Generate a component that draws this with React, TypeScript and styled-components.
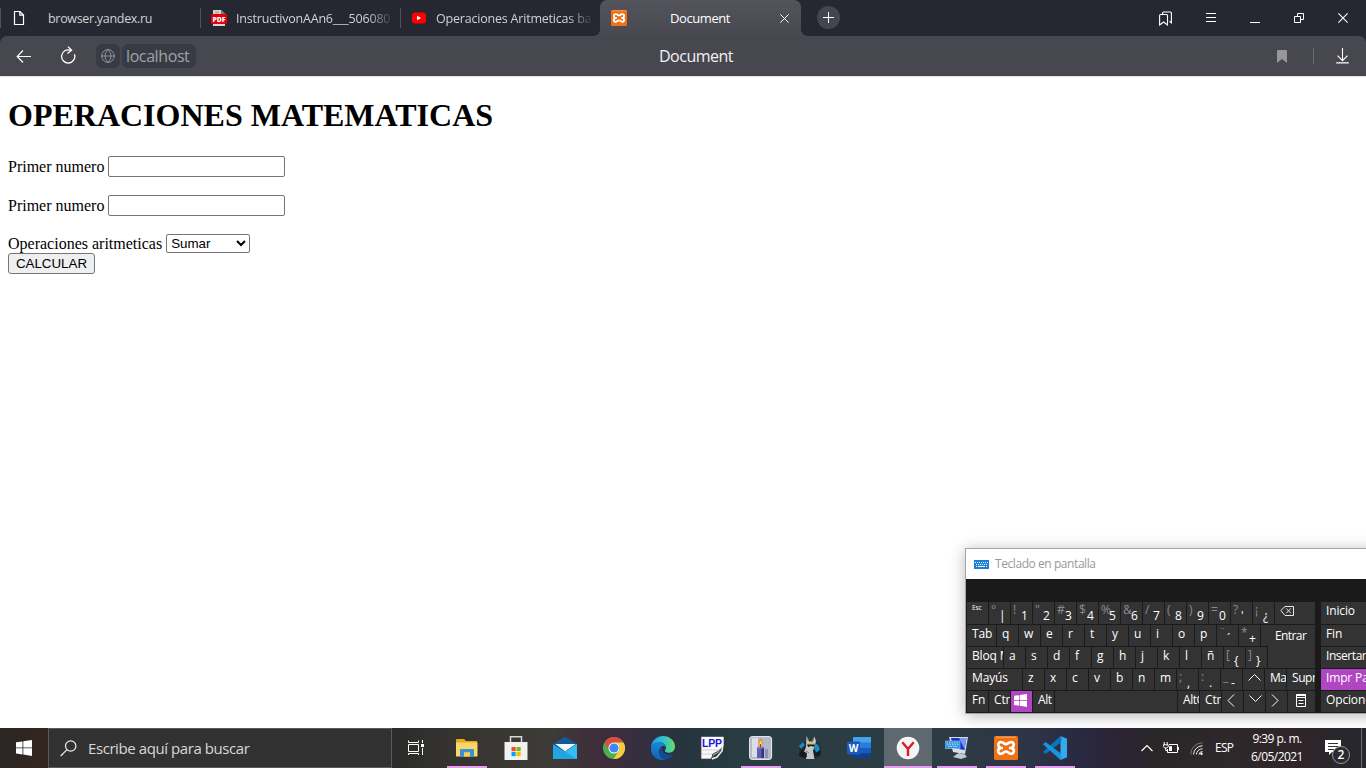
import React from 'react';
import styled, { createGlobalStyle, css } from 'styled-components';

const GlobalStyle = createGlobalStyle`
  *, *::before, *::after { box-sizing: border-box; }
  html, body { margin: 0; padding: 0; overflow: hidden; background: #fff; }
  svg { display: block; flex: none; }
`;

const ui = "'Open Sans', 'Noto Sans', sans-serif";

const Screen = styled.div`
  position: relative;
  width: 1366px;
  height: 768px;
  display: flex;
  flex-direction: column;
  overflow: hidden;
  background: #fff;
  font-family: ${ui};
`;

/* ---------- browser chrome ---------- */

const BrowserChrome = styled.div`
  height: 76px;
  flex: none;
  background: #252830;
`;

const TabStrip = styled.header`
  height: 36px;
  display: flex;
`;

const Tab = styled.div<{ $pad: number; $gap: number }>`
  width: 200px;
  height: 36px;
  flex: none;
  display: flex;
  align-items: center;
  gap: ${p => p.$gap}px;
  padding-left: ${p => p.$pad}px;
  background: linear-gradient(#50535a, #50535a) 0 8px / 1px 20px no-repeat;
`;

const TabTitle = styled.span<{ $fade?: boolean }>`
  font-size: 12.5px;
  line-height: 20px;
  padding-top: 1px;
  letter-spacing: ${p => (p.$fade ? -0.2 : -0.31)}px;
  color: #d0d1d3;
  white-space: nowrap;
  overflow: hidden;
  ${p =>
    p.$fade &&
    css`
      width: 156px;
      mask-image: linear-gradient(90deg, #000 132px, transparent 158px);
    `}
`;

const ActiveTab = styled.div`
  position: relative;
  width: 201px;
  height: 36px;
  flex: none;
  display: flex;
  align-items: center;
  padding-left: 11px;
  border-radius: 7px 7px 0 0;
  background: linear-gradient(#54545c, #484850);
  &::before, &::after {
    content: '';
    position: absolute;
    bottom: 0;
    width: 6px;
    height: 6px;
  }
  &::before { left: -6px; background: radial-gradient(circle at 0 0, transparent 5.5px, #47474f 6px); }
  &::after { right: -6px; background: radial-gradient(circle at 100% 0, transparent 5.5px, #47474f 6px); }
`;

const ActiveTitle = styled.span`
  width: 60px;
  margin: 0 50px 0 43px;
  font-size: 13px;
  line-height: 18px;
  letter-spacing: -0.42px;
  color: #fff;
  white-space: nowrap;
`;

const NewTab = styled.div`
  width: 23px;
  height: 23px;
  margin: 6px auto 0 16px;
  display: grid;
  place-items: center;
  border-radius: 50%;
  background: #44464d;
`;

const WindowControls = styled.div`
  display: flex;
  align-items: center;
  height: 36px;
  padding-right: 18px;
  gap: 34px;
`;

const AddressBar = styled.div`
  height: 40px;
  display: grid;
  grid-template-columns: 620px 1fr 620px;
  align-items: center;
  background: #47474f;
  border-radius: 7px 7px 0 0;
`;

const NavSide = styled.div`
  display: flex;
  align-items: center;
  padding-left: 16px;
`;

const ReloadGap = styled.span`
  margin-left: 28px;
  margin-top: -3px;
`;

const GlobeChip = styled.div`
  width: 24px;
  height: 24px;
  margin-left: 20px;
  display: grid;
  place-items: center;
  border-radius: 6px;
  background: #383b43;
`;

const HostChip = styled.div`
  width: 74px;
  height: 24px;
  margin-left: 2px;
  padding-left: 4px;
  border-radius: 6px;
  background: #383b43;
  font-size: 16px;
  line-height: 25px;
  letter-spacing: -0.4px;
  color: #a0a2a8;
  white-space: nowrap;
`;

const PageTitle = styled.div`
  padding: 0 0 0 39px;
  font-size: 16px;
  line-height: 22px;
  letter-spacing: -0.5px;
  color: #f1f1f2;
`;

const ActionSide = styled.div`
  display: flex;
  align-items: center;
  justify-content: flex-end;
  padding-right: 17px;
`;

const ThinRule = styled.div`
  width: 1px;
  height: 16px;
  margin: 0 22px 0 26px;
  background: #6a6a71;
`;

/* ---------- web page ---------- */

const Page = styled.main`
  height: 652px;
  flex: none;
  padding: 0 8px;
  border-top: 1px solid #e4e4e6;
  font-family: 'Liberation Serif', 'Times New Roman', serif;
  font-size: 16px;
  color: #000;
`;

const Heading = styled.h1`
  margin: 20px 0 22px;
  font-size: 32px;
  line-height: 37px;
  font-weight: bold;
`;

const FieldRow = styled.div<{ $height: number; $after: number }>`
  height: ${p => p.$height}px;
  margin-bottom: ${p => p.$after}px;
  display: flex;
  align-items: flex-start;
  gap: 4px;
  line-height: ${p => p.$height + 1}px;
`;

const NumberInput = styled.input`
  width: 177px;
  height: 21px;
  margin: 0;
  border: 1px solid #767676;
  border-radius: 2px;
  background: #fff;
`;

const OperationSelect = styled.select`
  width: 84px;
  height: 19px;
  margin: 0;
  border: 1px solid #767676;
  border-radius: 2px;
  background: #fff;
  color: #000;
  font: 13.333px 'Liberation Sans', Arial, sans-serif;
`;

const SubmitButton = styled.button`
  display: block;
  width: 87px;
  height: 21px;
  padding: 0;
  border: 1px solid #767676;
  border-radius: 3px;
  background: #efefef;
  color: #000;
  font: 13.333px 'Liberation Sans', Arial, sans-serif;
`;

/* ---------- on-screen keyboard window ---------- */

const KeyboardWindow = styled.section`
  position: absolute;
  left: 965px;
  top: 548px;
  width: 420px;
  height: 166px;
  border: 1px solid #a4a4a4;
  background: #1a1a1a;
  box-shadow: 0 2px 14px rgba(0, 0, 0, 0.28);
`;

const KeyboardTitle = styled.div`
  height: 30px;
  display: flex;
  align-items: center;
  gap: 6px;
  padding: 0 0 0 8px;
  background: #fff;
  color: #999;
  font-size: 12px;
  line-height: 16px;
  letter-spacing: -0.43px;
`;

const KeyboardBody = styled.div`
  display: flex;
  gap: 6px;
  padding: 23px 0 0 1px;
`;

const KeyBlock = styled.div`
  position: relative;
  width: 348px;
  display: flex;
  flex-direction: column;
  gap: 1px;
`;

const KeyRow = styled.div`
  display: flex;
  gap: 1px;
`;

const KeyCap = styled.div<{ $w?: number; $accent?: boolean; $tiny?: boolean; $h?: number; $tight?: boolean }>`
  width: ${p => p.$w ?? 21}px;
  height: ${p => p.$h ?? 21}px;
  flex: none;
  display: flex;
  padding-left: 5px;
  overflow: hidden;
  background: ${p => (p.$accent ? '#b146c2' : '#333')};
  color: #fff;
  font-size: ${p => (p.$tiny ? 6.5 : 12)}px;
  line-height: ${p => (p.$tiny ? 12 : 18)}px;
  letter-spacing: ${p => (p.$tight ? -0.45 : -0.15)}px;
  white-space: nowrap;
`;

const DualCap = styled(KeyCap)`
  padding-left: 2px;
`;

const ShiftMark = styled.span`
  width: 8px;
  flex: none;
  color: #8c8c8c;
  font-size: 12px;
  line-height: 16px;
`;

const BaseMark = styled.span<{ $lift: boolean }>`
  align-self: flex-end;
  line-height: 16px;
  margin-bottom: ${p => (p.$lift ? 0 : -1)}px;
`;

const WinKey = styled.span`
  margin: 3px 0 0 -2px;
`;

const MenuKey = styled.span`
  margin-left: 3px;
`;

const SideKeys = styled.div`
  display: flex;
  flex-direction: column;
  gap: 1px;
`;

const EnterKey = styled.div`
  position: absolute;
  left: 294px;
  top: 23px;
  width: 54px;
  height: 43px;
  padding: 1px 0 0 14px;
  background: #333;
  clip-path: polygon(0 0, 100% 0, 100% 100%, 7px 100%, 7px 21px, 0 21px);
  color: #fff;
  font-size: 12px;
  line-height: 20px;
  letter-spacing: -0.6px;
`;

/* ---------- taskbar ---------- */

const Taskbar = styled.footer`
  height: 40px;
  flex: none;
  display: flex;
  background: linear-gradient(90deg, #2b2524 0, #33261f 48px, #2b2b2a 392px, #353431 460px, #3d3b38 550px,
    #3e2d3b 600px, #352e3f 640px, #25343f 685px, #293c41 740px, #2b3c43 850px, #2d3a43 960px, #2e3447 1030px,
    #292942 1080px, #2b2433 1120px, #292728 1160px, #2d2829 1230px, #302529 1290px, #26272d 1366px);
`;

const StartButton = styled.div`
  width: 48px;
  display: grid;
  place-items: center;
`;

const SearchBox = styled.div`
  width: 344px;
  height: 40px;
  display: flex;
  align-items: center;
  gap: 11px;
  padding-left: 11px;
  border: 1px solid #5b5b5a;
  background: #323232;
  color: #d8d8d8;
  font-size: 15px;
  letter-spacing: -0.42px;
  white-space: nowrap;
`;

const TaskView = styled.div`
  width: 51px;
  padding-left: 16px;
  display: flex;
  align-items: center;
`;

const AppButton = styled.div<{ $state: 'idle' | 'open' | 'active' }>`
  width: 48px;
  height: 40px;
  margin-right: 1px;
  display: grid;
  place-items: center;
  background-color: ${p => (p.$state === 'active' ? '#5e686f' : 'transparent')};
  background-image: ${p => (p.$state === 'idle' ? 'none' : 'linear-gradient(#e79cf0, #e79cf0)')};
  background-size: ${p => (p.$state === 'active' ? '48px' : '40px')} 2px;
  background-position: 50% 100%;
  background-repeat: no-repeat;
`;

const Tray = styled.div`
  margin-left: auto;
  width: 225px;
  height: 40px;
  display: flex;
  align-items: center;
  color: #fff;
`;

const TrayGap = styled.span<{ $left: number }>`
  margin-left: ${p => p.$left}px;
`;

const Language = styled.span`
  width: 19px;
  margin-left: 12px;
  font-size: 12px;
  line-height: 40px;
  letter-spacing: -0.75px;
`;

const Clock = styled.div`
  width: 60px;
  margin: 0 18px 0 13px;
  display: flex;
  flex-direction: column;
  align-items: center;
  font-size: 12px;
  line-height: 18px;
  letter-spacing: -0.55px;
  white-space: nowrap;
`;

const Notices = styled.div`
  position: relative;
  width: 26px;
  height: 28px;
  padding-top: 6px;
`;

const NoticeCount = styled.span`
  position: absolute;
  left: 7px;
  top: 12px;
  width: 18px;
  height: 18px;
  border: 1px solid #999;
  border-radius: 50%;
  background: #2b2b2d;
  font-size: 12px;
  font-weight: 600;
  line-height: 15px;
  text-align: center;
`;

const DesktopEdge = styled.div`
  width: 1px;
  height: 40px;
  margin: 0 4px 0 auto;
  background: #6b6b6e;
`;

/* ---------- drawings ---------- */

const WindowsLogo = ({ size }: { size: number }) => (
  <svg width={size} height={size} viewBox="0 0 16 16" fill="#fff">
    <path d="M0 2.3 6.5 1.4V7.5H0ZM7.3 1.3 16 0V7.5H7.3ZM0 8.3H6.5V14.5L0 13.6ZM7.3 8.3H16V16L7.3 14.6Z" />
  </svg>
);

const FileIcon = () => (
  <svg width="12" height="16" viewBox="0 0 12 16" fill="none" stroke="#fff" strokeWidth="1.2">
    <path d="M1.5 1.5H7L10.5 5V14.5H1.5ZM6.8 1.5V5.2H10.5" />
  </svg>
);

const PdfIcon = () => (
  <svg width="16" height="16" viewBox="0 0 16 16">
    <path d="M2 0H10L14 4V16H2Z" fill="#d5d5d5" />
    <path d="M10 0V4H14Z" fill="#777" />
    <path d="M4 2H8M4 4H8" stroke="#999" />
    <rect y="4" width="16" height="10" rx="1" fill="#e2000c" />
    <text x="1.5" y="11.5" fill="#fff" fontSize="6.8" fontWeight="800" fontFamily="Open Sans" textLength="13">PDF</text>
  </svg>
);

const YoutubeIcon = () => (
  <svg width="14" height="12" viewBox="0 0 14 12">
    <rect y=".5" width="14" height="11" rx="3" fill="#f00" />
    <path d="M5 3.7 9.2 6 5 8.3Z" fill="#fff" />
  </svg>
);

const XamppIcon = ({ size }: { size: number }) => (
  <svg width={size} height={size} viewBox="0 0 24 24">
    <rect width="24" height="24" rx="1.6" fill="#ee7114" />
    <path d="M2 1.2H22" stroke="#ffad6b" strokeWidth="1" />
    <path
      d="M8 6.2C5.5 5.6 4 7.3 4.3 9.2 4.5 10.7 5.5 11.6 6.8 12 4.8 12.4 3.9 13.8 4.2 15.4 4.6 17.4 6.3 18.2 8 17.5 9.5 16.9 10.3 15.5 12 15.5S14.5 16.9 16 17.5C17.7 18.2 19.4 17.4 19.8 15.4 20.1 13.8 19.2 12.4 17.2 12 18.5 11.6 19.5 10.7 19.7 9.2 20 7.3 18.5 5.6 16 6.2 14.5 6.5 13.7 8.2 12 8.2S9.5 6.5 8 6.2Z"
      fill="none" stroke="#fff" strokeWidth="2.7"
    />
    <path d="M6 12H9M15 12H18" stroke="#fff" strokeWidth="2.4" />
  </svg>
);

const CloseIcon = ({ size }: { size: number }) => (
  <svg width={size} height={size} viewBox="0 0 10 10" stroke="#fff" strokeWidth="1.1">
    <path d="M.4.4 9.6 9.6M9.6.4.4 9.6" />
  </svg>
);

const PlusIcon = () => (
  <svg width="11" height="11" viewBox="0 0 11 11" stroke="#fff"><path d="M5.5 0V11M0 5.5H11" /></svg>
);

const CollectionsIcon = () => (
  <svg width="13" height="15" viewBox="0 0 13 15" fill="none" stroke="#fff" strokeWidth="1.1">
    <path d="M.6 14V4.5Q.6 3.5 1.6 3.5H7.5Q8.5 3.5 8.5 4.5V14L4.6 11ZM3.6 3.2V2Q3.6 1 4.6 1H11.4Q12.4 1 12.4 2V11.8L10.5 10.3" />
  </svg>
);

const MenuIcon = () => (
  <svg width="10" height="10" viewBox="0 0 10 10" stroke="#fff"><path d="M0 .5H10M0 4.5H10M0 8.5H10" /></svg>
);

const MinimizeIcon = () => (
  <svg width="10" height="10" viewBox="0 0 10 10" stroke="#fff"><path d="M0 9.5H10" /></svg>
);

const RestoreIcon = () => (
  <svg width="10" height="10" viewBox="0 0 10 10" stroke="#fff" fill="none">
    <path d="M.5 3.5H6.5V9.5H.5ZM3.5 3.5V.5H9.5V6.5H6.5" />
  </svg>
);

const BackIcon = () => (
  <svg width="16" height="14" viewBox="0 0 16 14" stroke="#fff" strokeWidth="1.2" fill="none">
    <path d="M15 7.5H1.5M7 1.5 1.2 7.5 7 13.5" />
  </svg>
);

const ReloadIcon = () => (
  <svg width="16" height="18" viewBox="0 0 16 18" stroke="#fff" strokeWidth="1.3" fill="none">
    <path d="M14.4 8.2A6.6 6.6 0 1 1 10.6 4.3M8 .6 11.6 4.3 7.4 7.5" />
  </svg>
);

const GlobeIcon = () => (
  <svg width="14" height="14" viewBox="0 0 14 14" stroke="#92949a" fill="none">
    <circle cx="7" cy="7" r="6.4" />
    <path d="M.6 7H13.4M7 .6C3 4.6 3 9.4 7 13.4M7 .6C11 4.6 11 9.4 7 13.4" />
  </svg>
);

const BookmarkIcon = () => (
  <svg width="10" height="13" viewBox="0 0 10 13"><path d="M0 1Q0 0 1 0H9Q10 0 10 1V13L5 9 0 13Z" fill="#96969b" /></svg>
);

const DownloadIcon = () => (
  <svg width="13" height="16" viewBox="0 0 13 16" stroke="#fff" fill="none" strokeWidth="1.1">
    <path d="M6.5 0V12.5M1.5 7.7 6.5 12.7 11.5 7.7M.2 14.9H12.8" />
  </svg>
);

const KeyboardGlyph = () => (
  <svg width="15" height="9" viewBox="0 0 15 9">
    <rect width="15" height="9" fill="#1a80d6" />
    <path d="M1 2.5H14M2 4.5H13" stroke="#fff" strokeDasharray="1 1" />
    <path d="M2 6.5H3M4 6.5H11M12 6.5H13" stroke="#fff" />
  </svg>
);

const BackspaceIcon = () => (
  <svg width="14" height="18" viewBox="0 0 14 18" stroke="#e8e8e8" fill="none">
    <path d="M.8 8.5 5 4.5H13.5V13.5H5ZM6.2 6.4 10.9 11.2M10.9 6.4 6.2 11.2" />
  </svg>
);

const ArrowGlyph = ({ d }: { d: string }) => (
  <svg width="13" height="18" viewBox="0 0 13 18" stroke="#fff" fill="none"><path d={d} /></svg>
);

const MenuKeyIcon = () => (
  <svg width="10" height="18" viewBox="0 0 10 18" stroke="#fff" fill="none">
    <path d="M.5 3.5H9.5V15.5H.5ZM0 4.5H10M0 6.5H10M2.5 9.5H7.5M2.5 12.5H7.5" />
  </svg>
);

const SearchIcon = () => (
  <svg width="17" height="17" viewBox="0 0 17 17" stroke="#eee" strokeWidth="1.2" fill="none">
    <circle cx="10.7" cy="6" r="5.2" /><path d="M7 9.7.7 16" />
  </svg>
);

const TaskViewIcon = () => (
  <svg width="16" height="16" viewBox="0 0 16 16" stroke="#fff" fill="none">
    <path d="M.5.5V2.5H10.5V.5M.5 15V13.5H10.5V15M.5 4.5H10.5V11.5H.5ZM14.5 0V3M14.5 8V15" />
    <path d="M13 4H16V7H13Z" fill="#fff" stroke="none" />
  </svg>
);

const AppSvg = ({ children }: { children: React.ReactNode }) => (
  <svg width="24" height="24" viewBox="0 0 24 24">{children}</svg>
);

const ExplorerIcon = () => (
  <AppSvg>
    <path d="M1 4Q1 3 2 3H9L11 5H22V20H1Z" fill="#eea91b" />
    <path d="M1 6.5H22.5V20.5H1Z" fill="#fcd767" />
    <path d="M5 21V14Q5 13 6 13H18Q19 13 19 14V21H15V16.5H9V21Z" fill="#3a91d5" />
    <path d="M9 16.5H15V20.5H9Z" fill="#f8cf56" />
  </AppSvg>
);

const StoreIcon = () => (
  <AppSvg>
    <path d="M6.5 6V.8H17.5V6" fill="none" stroke="#d8d8d8" strokeWidth="1.5" />
    <path d="M.5 6H23.5V24H.5Z" fill="#f1f1f1" />
    <path d="M7.5 11H11.7V15.2H7.5Z" fill="#f25022" /><path d="M12.5 11H16.7V15.2H12.5Z" fill="#7fba00" />
    <path d="M7.5 16H11.7V20.2H7.5Z" fill="#00a4ef" /><path d="M12.5 16H16.7V20.2H12.5Z" fill="#ffb900" />
  </AppSvg>
);

const MailIcon = () => (
  <AppSvg>
    <path d="M0 8 12 .8 24 8V13H0Z" fill="#135a9d" />
    <path d="M0 8.5 12 15.5 24 8V23H0Z" fill="#20a5e5" />
    <path d="M24 8V23L12 15.5Z" fill="#34bdf2" />
    <path d="M2.3 8H22.7L12 15.3Z" fill="#f7f9fa" />
  </AppSvg>
);

const ChromeIcon = () => (
  <AppSvg>
    <circle cx="12" cy="12" r="11" fill="#4bae4f" />
    <path d="M2.5 6.5A11 11 0 0 1 21.5 6.5H12A5.5 5.5 0 0 0 7.2 14.8Z" fill="#df4b3e" />
    <path d="M21.5 6.5A11 11 0 0 1 11.6 23L16.8 14.8A5.5 5.5 0 0 0 12 6.5Z" fill="#f9cc3e" />
    <circle cx="12" cy="12" r="5.5" fill="#fff" /><circle cx="12" cy="12" r="4.6" fill="#4285f4" />
  </AppSvg>
);

const EdgeIcon = () => (
  <AppSvg>
    <defs>
      <linearGradient id="edgeTop"><stop offset="0" stopColor="#1c9de1" /><stop offset=".55" stopColor="#35c1cf" /><stop offset="1" stopColor="#65dd5c" /></linearGradient>
      <linearGradient id="edgeBase" x2="0" y2="1"><stop offset="0" stopColor="#1886d9" /><stop offset="1" stopColor="#1261b4" /></linearGradient>
    </defs>
    <path d="M0 11C.8 4 6 0 12.2 0 19 0 24 5 24 10.6 24 14.5 21.5 16.7 18 16.7 15 16.7 13.8 15.7 13.8 14.8 13.8 14 15 13.5 15 11.5 15 8.5 12 6.5 8.5 6.5 4.5 6.5 1.5 8.2 0 11Z" fill="url(#edgeTop)" />
    <path d="M0 11.5C1 8.2 4.5 6.5 8.5 6.5 12 6.5 15 8.5 15 11 12.5 8.5 8.2 11 8.2 15.5 8.2 20 11.5 23 14.5 23.7 6.5 25.5-.5 20 0 11.5Z" fill="url(#edgeBase)" />
    <path d="M10.3 11C6.8 14 8.2 22.8 15 23.6 18.5 22.8 21 20.5 22.5 18 16.5 20.5 10.4 17.2 10.3 11Z" fill="#124c94" />
  </AppSvg>
);

const LppIcon = () => (
  <AppSvg>
    <path d="M1 .5H24V8L21 14 18 17 14 19 12 23H1Z" fill="#f9f9f9" stroke="#444" strokeWidth=".7" />
    <path d="M2 14H20M2 18H15" stroke="#d0d0d0" />
    <path d="M11.5 23 13 18 18 15.5 23 11" fill="none" stroke="#333" />
    <path d="M12 23 17 21 22 15 23 8" fill="none" stroke="#eee" strokeWidth="1.6" />
    <text x="2" y="11" fontFamily="Liberation Sans" fontSize="10.5" fontWeight="700" fill="#1a16df" textLength="20">LPP</text>
  </AppSvg>
);

const CandleIcon = () => (
  <AppSvg>
    <rect x=".6" y=".6" width="22" height="22.8" rx="2.5" fill="#b4b9c8" stroke="#efeff4" />
    <path d="M3 2H9V21H3Z" fill="#e9ebf1" opacity=".75" />
    <path d="M8 11.5H15V22H8Z" fill="#5f61ae" /><path d="M12.5 11.5H15V22H12.5Z" fill="#34376f" />
    <path d="M16 13H19V22H16Z" fill="#8b8fc2" />
    <ellipse cx="11.5" cy="11.5" rx="3.5" ry="1" fill="#8487cf" />
    <path d="M11.5 2C14.5 7 14 10 11.5 10S8.5 7 11.5 2Z" fill="#f57d17" /><path d="M11.5 4C13.4 8 13 9.7 11.5 9.7S9.6 8 11.5 4Z" fill="#ffe74a" />
    <path d="M11.5 8V11.5" stroke="#c92c20" />
  </AppSvg>
);

const DonkeyIcon = () => (
  <AppSvg>
    <path d="M2 11 7 5 9 11 14 10 19 6Q25 12 22 20L15 23H8L1 20Z" fill="#222324" />
    <path d="M1 10 5 6 7 9 3 13ZM17 7Q22 8 22 16L19 18 16 12Z" fill="#178cc9" />
    <path d="M8.5 0 11 5.5H14L16.5.5 18 5 16.5 10 15 15 16.5 23H8L9 17 6 16 8 11Z" fill="#c3c8ca" />
    <path d="M9.2 1 10.5 5M16 1.5 14.3 6M8 15 11 17" stroke="#777" />
    <path d="M9 7.4Q13 6 17 7.4V8.6H9Z" fill="#e9b52b" /><path d="M9 8.6H17L16 10.8 13 10 10 11Z" fill="#17191b" />
    <path d="M1 20Q3 14 7 16L9 21ZM16 18 22 14 22 20Z" fill="#17191a" />
  </AppSvg>
);

const WordIcon = () => (
  <AppSvg>
    <path d="M6 1.5Q6 1 7 1H24V7H6Z" fill="#41a5ee" /><path d="M6 6.5H24V12H6Z" fill="#2b7cd3" />
    <path d="M6 12H24V17.5H6Z" fill="#185abd" /><path d="M6 17.5H24V22H7Q6 22 6 21Z" fill="#103f91" />
    <rect y="5.5" width="13" height="13" rx="1" fill="#185abd" />
    <text x="6.5" y="15.7" textAnchor="middle" fontFamily="Open Sans" fontWeight="700" fontSize="10" fill="#fff">W</text>
  </AppSvg>
);

const YandexIcon = () => (
  <AppSvg>
    <circle cx="12" cy="12" r="11.3" fill="#f4f4f4" />
    <path d="M6.3 6.3 12 13 17.7 6.3M12 12.5V20" fill="none" stroke="#db1c24" strokeWidth="2.4" />
  </AppSvg>
);

const OskIcon = () => (
  <AppSvg>
    <path d="M4 1H23L20 18 8 16Z" fill="#d9dde6" /><path d="M6 2H21.5L19.5 14 8 12Z" fill="#1833c6" />
    <path d="M14 2H21.5L19.5 13Z" fill="#7697ef" /><path d="M14 17 20 18.5 22 21 16 23 8 21 12 18Z" fill="#c3c8cf" />
    <rect y="5" width="15" height="7.5" fill="#2d91df" stroke="#b4dafa" strokeWidth=".5" />
    <path d="M1.5 7H14M2 8.8H13.5M3 10.6H12" stroke="#dcefff" strokeWidth=".8" strokeDasharray="1.5 1" />
  </AppSvg>
);

const VsCodeIcon = () => (
  <AppSvg>
    <path d="M17.5 0 24 2.7V21.3L17.5 24Z" fill="#35a9ed" />
    <path d="M18 6.5 2.5 18 0 15.8 17.5 0 18.5 1Z" fill="#0876bd" />
    <path d="M18 17.5 2.5 6 0 8.2 17.5 24 18.5 23Z" fill="#1994df" />
  </AppSvg>
);

const ChevronUp = () => (
  <svg width="12" height="8" viewBox="0 0 12 8" fill="none" stroke="#fff" strokeWidth="1.2"><path d="M.5 7 6 1.5 11.5 7" /></svg>
);

const BatteryIcon = () => (
  <svg width="16" height="12" viewBox="0 0 16 12" fill="none" stroke="#fff">
    <path d="M6 2.5H14.5V10.5H4.5V7M15.5 5V8M1.2 0V3M4.2 0V3M.3 2.8H5.2V4.5L3.8 6H1.7L.3 4.5ZM2.7 6V8.5H4.5" />
    <path d="M6 4.2H9V9H6Z" fill="#fff" stroke="none" />
  </svg>
);

const WifiIcon = () => (
  <svg width="13" height="13" viewBox="0 0 13 13" fill="none" stroke="#eee">
    <path d="M.7 12.5A11.7 11.7 0 0 1 12.5.8" stroke="#777" />
    <path d="M3.6 12.5A8.8 8.8 0 0 1 12.5 3.8M6.4 12.5A6 6 0 0 1 12.5 6.8M9 12.5A3.6 3.6 0 0 1 12.5 9.5" />
    <circle cx="11.5" cy="11.7" r="1.2" fill="#fff" stroke="none" />
  </svg>
);

const NoticeIcon = () => (
  <svg width="17" height="17" viewBox="0 0 17 17">
    <path d="M0 0H16V12H7L4 15V12H0Z" fill="#fff" /><path d="M3 3.5H13M3 6.5H13M3 9.5H9" stroke="#333" />
  </svg>
);

/* ---------- data ---------- */

const numberKeys: [string, string][] = [
  ['°', '|'], ['!', '1'], ['"', '2'], ['#', '3'], ['$', '4'], ['%', '5'], ['&', '6'],
  ['/', '7'], ['(', '8'], [')', '9'], ['=', '0'], ['?', "'"], ['¡', '¿'],
];

const apps: { name: string; state: 'idle' | 'open' | 'active'; icon: React.ReactNode }[] = [
  { name: 'explorer', state: 'open', icon: <ExplorerIcon /> },
  { name: 'store', state: 'idle', icon: <StoreIcon /> },
  { name: 'mail', state: 'idle', icon: <MailIcon /> },
  { name: 'chrome', state: 'idle', icon: <ChromeIcon /> },
  { name: 'edge', state: 'idle', icon: <EdgeIcon /> },
  { name: 'lpp', state: 'idle', icon: <LppIcon /> },
  { name: 'candle', state: 'open', icon: <CandleIcon /> },
  { name: 'donkey', state: 'idle', icon: <DonkeyIcon /> },
  { name: 'word', state: 'idle', icon: <WordIcon /> },
  { name: 'yandex', state: 'active', icon: <YandexIcon /> },
  { name: 'osk', state: 'open', icon: <OskIcon /> },
  { name: 'xampp', state: 'open', icon: <XamppIcon size={24} /> },
  { name: 'code', state: 'open', icon: <VsCodeIcon /> },
];

const Dual = ({ marks: [shift, base], tall = false }: { marks: [string, string]; tall?: boolean }) => (
  <DualCap $h={tall ? 22 : 21}><ShiftMark>{shift}</ShiftMark><BaseMark $lift={tall}>{base}</BaseMark></DualCap>
);

const Letters = ({ keys }: { keys: string }) => (
  <>{keys.split('').map(k => <KeyCap key={k}>{k}</KeyCap>)}</>
);

const OnScreenKeyboard = () => (
  <KeyboardWindow>
    <KeyboardTitle><KeyboardGlyph />Teclado en pantalla</KeyboardTitle>
    <KeyboardBody>
      <KeyBlock>
        <KeyRow>
          <KeyCap $tiny $h={22}>Esc</KeyCap>
          {numberKeys.map(m => <Dual key={m[1]} marks={m} tall />)}
          <KeyCap $w={40} $h={22}><BackspaceIcon /></KeyCap>
        </KeyRow>
        <KeyRow>
          <KeyCap $w={29}>Tab</KeyCap>
          <Letters keys="qwertyuiop" />
          <Dual marks={['¨', '´']} />
          <Dual marks={['*', '+']} />
        </KeyRow>
        <KeyRow>
          <KeyCap $w={36}>Bloq M</KeyCap>
          <Letters keys="asdfghjklñ" />
          <Dual marks={['[', '{']} />
          <Dual marks={[']', '}']} />
        </KeyRow>
        <KeyRow>
          <KeyCap $w={55}>Mayús</KeyCap>
          <Letters keys="zxcvbnm" />
          <Dual marks={[';', ',']} />
          <Dual marks={[':', '.']} />
          <Dual marks={['_', '-']} />
          <KeyCap><ArrowGlyph d="M.5 11.5 6.5 5.5 12.5 11.5" /></KeyCap>
          <KeyCap $tight>Ma</KeyCap>
          <KeyCap $w={28} $tight>Supr</KeyCap>
        </KeyRow>
        <KeyRow>
          <KeyCap>Fn</KeyCap>
          <KeyCap>Ctr</KeyCap>
          <KeyCap $accent><WinKey><WindowsLogo size={13} /></WinKey></KeyCap>
          <KeyCap $tight>Alt</KeyCap>
          <KeyCap $w={122} />
          <KeyCap $tight>AltG</KeyCap>
          <KeyCap>Ctr</KeyCap>
          <KeyCap><ArrowGlyph d="M7 3.5 1 9.5 7 15.5" /></KeyCap>
          <KeyCap><ArrowGlyph d="M.5 4.5 6.5 10.5 12.5 4.5" /></KeyCap>
          <KeyCap><ArrowGlyph d="M1 3.5 7 9.5 1 15.5" /></KeyCap>
          <KeyCap $w={27}><MenuKey><MenuKeyIcon /></MenuKey></KeyCap>
        </KeyRow>
        <EnterKey>Entrar</EnterKey>
      </KeyBlock>
      <SideKeys>
        <KeyCap $w={80} $h={22}>Inicio</KeyCap>
        <KeyCap $w={80}>Fin</KeyCap>
        <KeyCap $w={80} $tight>Insertar</KeyCap>
        <KeyCap $w={80} $accent>Impr Pant</KeyCap>
        <KeyCap $w={80}>Opciones</KeyCap>
      </SideKeys>
    </KeyboardBody>
  </KeyboardWindow>
);

export default function App() {
  return (
    <Screen>
      <GlobalStyle />
      <BrowserChrome>
        <TabStrip>
          <Tab $pad={13} $gap={23}><FileIcon /><TabTitle>browser.yandex.ru</TabTitle></Tab>
          <Tab $pad={11} $gap={9}><PdfIcon /><TabTitle $fade>InstructivonAAn6___506080</TabTitle></Tab>
          <Tab $pad={12} $gap={10}><YoutubeIcon /><TabTitle $fade>Operaciones Aritmeticas bas</TabTitle></Tab>
          <ActiveTab>
            <XamppIcon size={16} />
            <ActiveTitle>Document</ActiveTitle>
            <CloseIcon size={9} />
          </ActiveTab>
          <NewTab><PlusIcon /></NewTab>
          <WindowControls>
            <CollectionsIcon /><MenuIcon /><MinimizeIcon /><RestoreIcon /><CloseIcon size={10} />
          </WindowControls>
        </TabStrip>
        <AddressBar>
          <NavSide>
            <BackIcon />
            <ReloadGap><ReloadIcon /></ReloadGap>
            <GlobeChip><GlobeIcon /></GlobeChip>
            <HostChip>localhost</HostChip>
          </NavSide>
          <PageTitle>Document</PageTitle>
          <ActionSide><BookmarkIcon /><ThinRule /><DownloadIcon /></ActionSide>
        </AddressBar>
      </BrowserChrome>
      <Page>
        <Heading>OPERACIONES MATEMATICAS</Heading>
        <FieldRow $height={21} $after={18}>Primer numero <NumberInput /></FieldRow>
        <FieldRow $height={21} $after={18}>Primer numero <NumberInput /></FieldRow>
        <FieldRow $height={19} $after={0}>
          Operaciones aritmeticas
          <OperationSelect defaultValue="Sumar"><option>Sumar</option></OperationSelect>
        </FieldRow>
        <SubmitButton>CALCULAR</SubmitButton>
      </Page>
      <Taskbar>
        <StartButton><WindowsLogo size={16} /></StartButton>
        <SearchBox><SearchIcon />Escribe aquí para buscar</SearchBox>
        <TaskView><TaskViewIcon /></TaskView>
        {apps.map(a => <AppButton key={a.name} $state={a.state}>{a.icon}</AppButton>)}
        <Tray>
          <ChevronUp />
          <TrayGap $left={10}><BatteryIcon /></TrayGap>
          <TrayGap $left={11}><WifiIcon /></TrayGap>
          <Language>ESP</Language>
          <Clock><span>9:39 p. m.</span><span>6/05/2021</span></Clock>
          <Notices><NoticeIcon /><NoticeCount>2</NoticeCount></Notices>
          <DesktopEdge />
        </Tray>
      </Taskbar>
      <OnScreenKeyboard />
    </Screen>
  );
}
